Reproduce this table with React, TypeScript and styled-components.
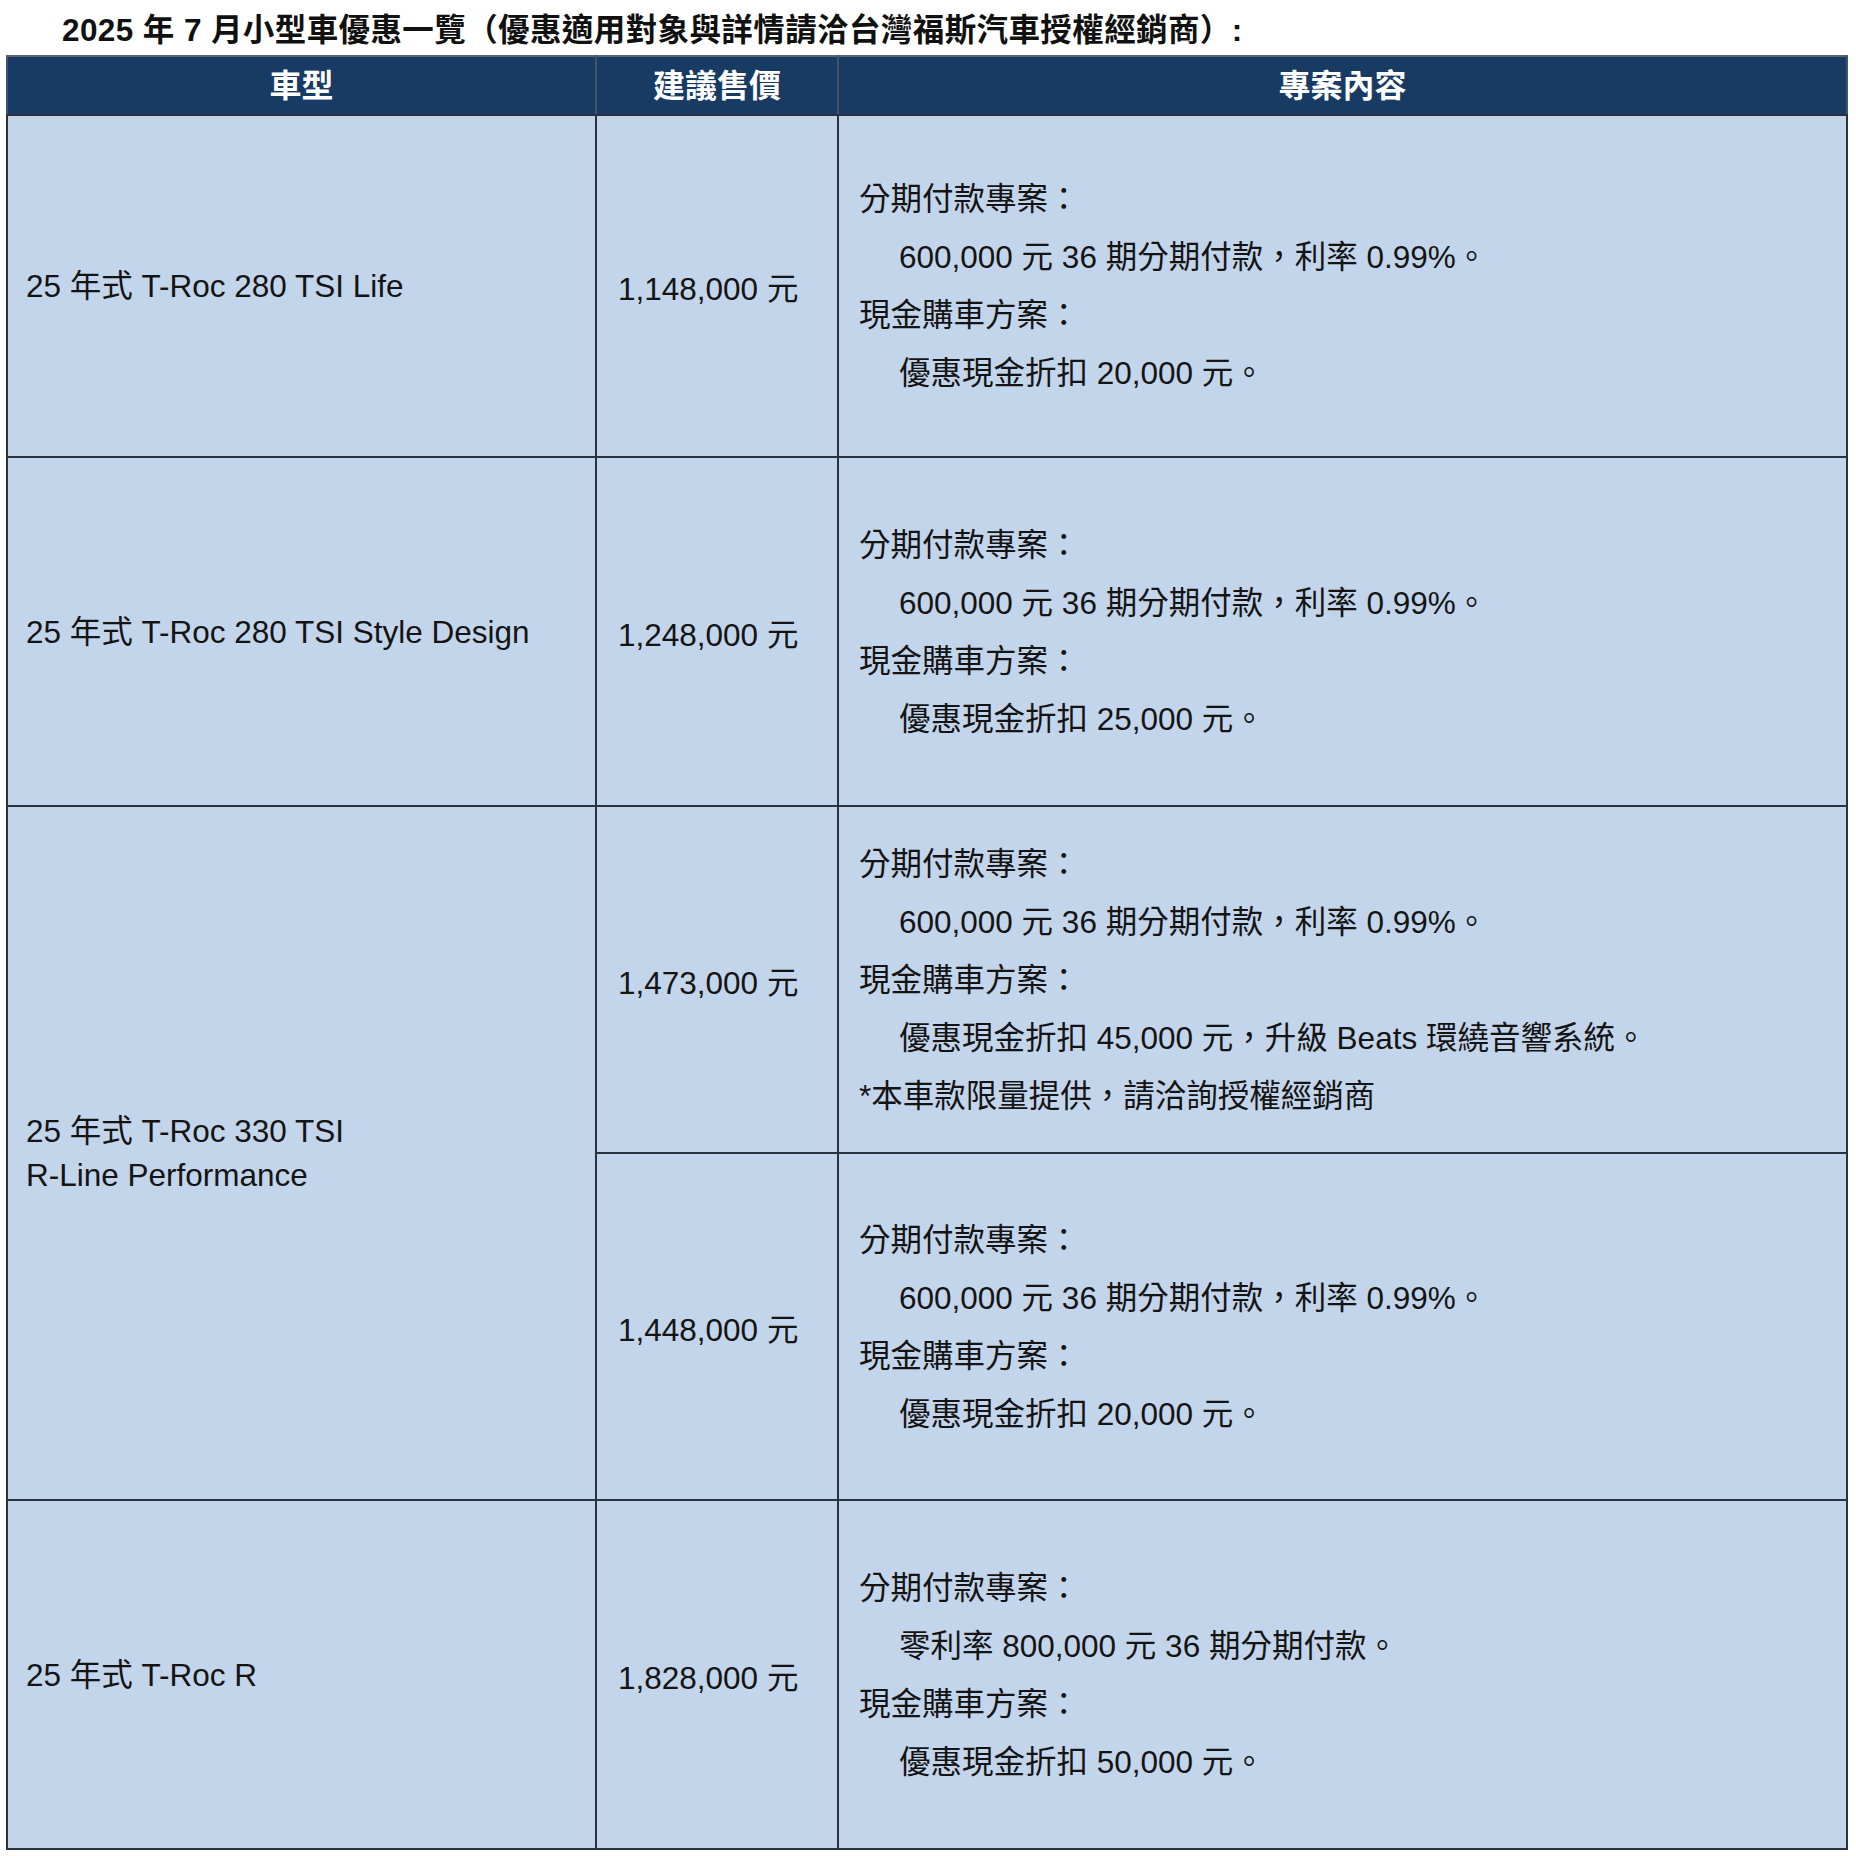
import styled, { createGlobalStyle } from 'styled-components';

const GlobalStyle = createGlobalStyle`
	html, body {
		margin: 0;
		padding: 0;
		background: #fff;
	}
	body {
		font-family: 'Liberation Sans', Arial, 'Noto Sans CJK TC', sans-serif;
		color: #111;
	}
`;

type Line = { text: string; indent?: boolean };
type Offer = { price: string; height: number; lines: Line[] };
type Model = { name: string[]; offers: Offer[] };

const installment = '分期付款專案：';
const cash = '現金購車方案：';
const rate = '600,000 元 36 期分期付款，利率 0.99%。';

const models: Model[] = [
	{
		name: ['25 年式 T-Roc 280 TSI Life'],
		offers: [
			{
				price: '1,148,000 元',
				height: 342,
				lines: [
					{ text: installment },
					{ text: rate, indent: true },
					{ text: cash },
					{ text: '優惠現金折扣 20,000 元。', indent: true },
				],
			},
		],
	},
	{
		name: ['25 年式 T-Roc 280 TSI Style Design'],
		offers: [
			{
				price: '1,248,000 元',
				height: 349,
				lines: [
					{ text: installment },
					{ text: rate, indent: true },
					{ text: cash },
					{ text: '優惠現金折扣 25,000 元。', indent: true },
				],
			},
		],
	},
	{
		name: ['25 年式 T-Roc 330 TSI', 'R-Line Performance'],
		offers: [
			{
				price: '1,473,000 元',
				height: 347,
				lines: [
					{ text: installment },
					{ text: rate, indent: true },
					{ text: cash },
					{ text: '優惠現金折扣 45,000 元，升級 Beats 環繞音響系統。', indent: true },
					{ text: '*本車款限量提供，請洽詢授權經銷商' },
				],
			},
			{
				price: '1,448,000 元',
				height: 347,
				lines: [
					{ text: installment },
					{ text: rate, indent: true },
					{ text: cash },
					{ text: '優惠現金折扣 20,000 元。', indent: true },
				],
			},
		],
	},
	{
		name: ['25 年式 T-Roc R'],
		offers: [
			{
				price: '1,828,000 元',
				height: 349,
				lines: [
					{ text: installment },
					{ text: '零利率 800,000 元 36 期分期付款。', indent: true },
					{ text: cash },
					{ text: '優惠現金折扣 50,000 元。', indent: true },
				],
			},
		],
	},
];

const App = () => {
	return (
		<>
			<GlobalStyle />
			<Page>
				<Title>2025 年 7 月小型車優惠一覽（優惠適用對象與詳情請洽台灣福斯汽車授權經銷商）:</Title>
				<Table>
					<colgroup>
						<col style={{ width: 589 }} />
						<col style={{ width: 242 }} />
						<col style={{ width: 1009 }} />
					</colgroup>
					<thead>
						<tr>
							<Th>車型</Th>
							<Th>建議售價</Th>
							<Th>專案內容</Th>
						</tr>
					</thead>
					<tbody>
						{models.map((model) =>
							model.offers.map((offer, i) => (
								<Row key={offer.price} $height={offer.height}>
									{i === 0 && (
										<ModelCell rowSpan={model.offers.length}>
											{model.name.map((n) => (
												<div key={n}>{n}</div>
											))}
										</ModelCell>
									)}
									<PriceCell>{offer.price}</PriceCell>
									<ContentCell>
										{offer.lines.map((line) => (
											<Detail key={line.text} $indent={line.indent}>
												{line.text}
											</Detail>
										))}
									</ContentCell>
								</Row>
							))
						)}
					</tbody>
				</Table>
			</Page>
		</>
	);
};

export default App;

const Page = styled.div`
	width: 1856px;
	padding-left: 6px;
	box-sizing: border-box;
`;

const Title = styled.h1`
	margin: 0;
	height: 55px;
	padding: 6px 0 0 56px;
	box-sizing: border-box;
	font-size: 31.5px;
	line-height: 48px;
	font-weight: 700;
	color: #111;
	white-space: nowrap;
	letter-spacing: 0.4px;
`;

const Table = styled.table`
	width: 1840px;
	table-layout: fixed;
	border-collapse: collapse;
	border: 2px solid #2a323d;
`;

const Th = styled.th`
	height: 52px;
	padding: 0 0 5px;
	background: #183b63;
	color: #fff;
	font-size: 32px;
	font-weight: 700;
	text-align: center;
	border: 2px solid #44536a;
	border-bottom: 2px solid #2a323d;
	border-top: 2px solid #5b6675;
`;

interface RowProps {
	$height: number;
}

const Row = styled.tr<RowProps>`
	height: ${(p) => p.$height}px;
`;

const Cell = styled.td`
	background: #c3d5ea;
	border: 2px solid #2a323d;
	vertical-align: middle;
	font-size: 31.5px;
	color: #141414;
`;

const ModelCell = styled(Cell)`
	padding: 0 0 0 18px;
	line-height: 44px;
`;

const PriceCell = styled(Cell)`
	padding: 0 0 0 21px;
	white-space: nowrap;
`;

const ContentCell = styled(Cell)`
	padding: 0 0 0 20px;
`;

interface DetailProps {
	$indent?: boolean;
}

const Detail = styled.div<DetailProps>`
	line-height: 58px;
	white-space: nowrap;
	padding-left: ${(p) => (p.$indent ? '40px' : '0')};
`;
